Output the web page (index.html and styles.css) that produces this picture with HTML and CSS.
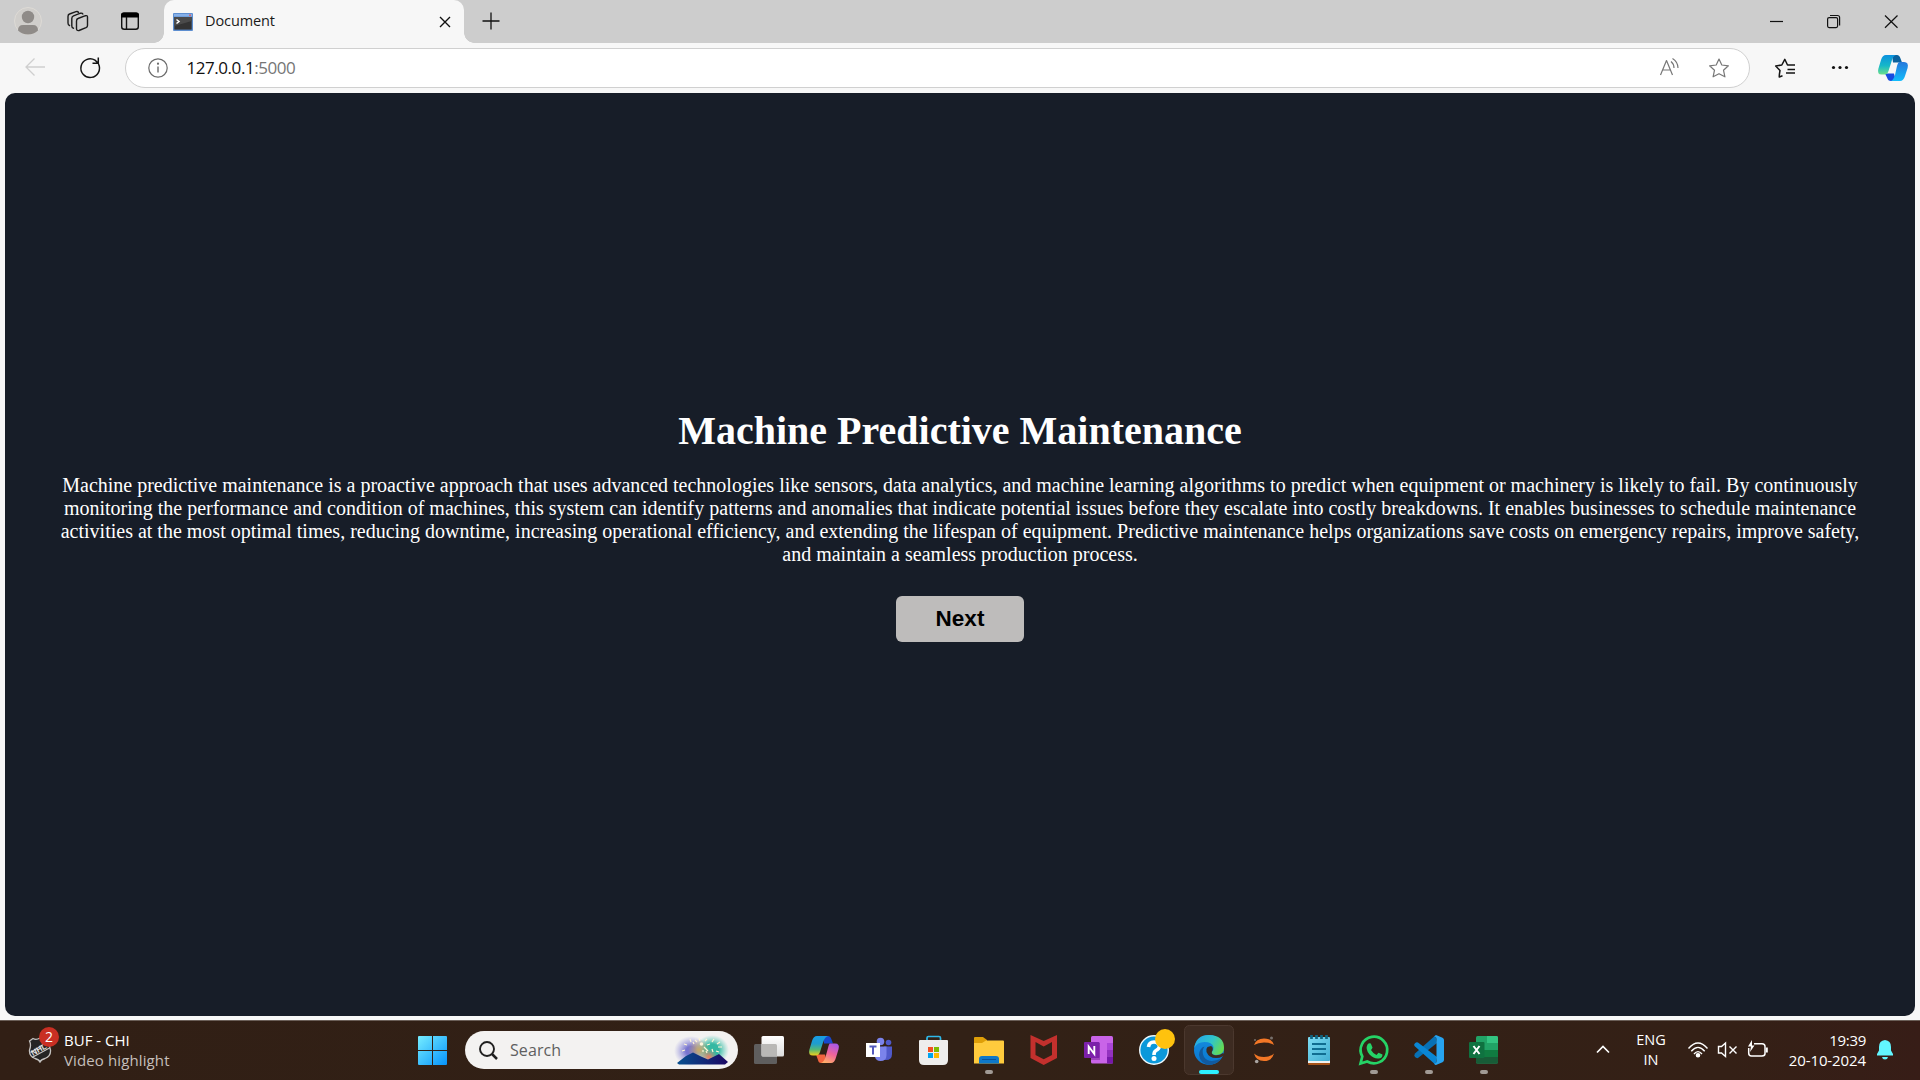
FILE: index.html
```
<!DOCTYPE html>
<html lang="en">
<head>
<meta charset="utf-8">
<title>Document</title>
<link rel="stylesheet" href="styles.css">
</head>
<body>
<header class="tabstrip">
  <svg class="strip-icons" width="164" height="43" viewBox="0 0 164 43" fill="none">
    <circle cx="28" cy="21" r="13.5" fill="#d0cecb" stroke="#dedbd6"/>
    <circle cx="28" cy="17" r="6.2" fill="#8f8b88"/>
    <path d="M18 30.5Q18 25 23 25H33Q38 25 38 30.5Q34 34.5 28 34.5T18 30.5Z" fill="#8f8b88"/>
    <g stroke="#1b1b1b" stroke-width="1.4" stroke-linejoin="round" stroke-linecap="round">
      <path d="M78 18.5L85.500 15.700Q87.500 15.200 87.500 17V25.500Q87.500 27 86 27.700L79 30.500Q76.500 31 76.500 28.500V21Q76.500 19 78 18.500Z"/>
      <path d="M73.500 28.200Q71.800 28 71.800 26V18.500Q71.800 16.500 73.500 15.800L80.500 13.200Q82.300 12.800 82.800 14"/>
      <path d="M69.500 25.500Q68 25 68 23V16.500Q68 14.500 69.500 14L76 11.600Q77.800 11.200 78.500 12.300"/>
    </g>
    <rect x="121.700" y="13.200" width="16.600" height="16" rx="2.500" stroke="#111" stroke-width="1.400"/>
    <path d="M121 17.500V15Q121 12.500 123.500 12.500H136.500Q139 12.500 139 15V17.500Z" fill="#000"/>
    <path d="M126.500 17V29" stroke="#111" stroke-width="1.400"/>
  </svg>
  <div class="tab">
    <svg width="20" height="18" viewBox="0 0 20 18">
      <rect width="20" height="18" rx="1" fill="#5d8ed0"/><rect x="1" y="1" width="18" height="2.500" fill="#86b0e8"/>
      <circle cx="17" cy="2.200" r="1" fill="#d9606a"/><rect x="1.300" y="4" width="17.400" height="12.600" fill="#333"/>
      <path d="M1.300 4H18.700V8L1.300 13Z" fill="#4a4a4a"/><path d="M3.500 6.500L6 8.500L3.500 10.500" fill="none" stroke="#fff" stroke-width="1.500"/>
    </svg>
    <span class="tab-title">Document</span>
    <svg width="12" height="12" viewBox="0 0 12 12"><path d="M1 1L11 11M11 1L1 11" stroke="#111" stroke-width="1.400"/></svg>
  </div>
  <svg class="plus" width="18" height="18" viewBox="0 0 18 18"><path d="M9 .5V17.500M.5 9H17.500" stroke="#111" stroke-width="1.300"/></svg>
  <svg class="caption" width="170" height="43" viewBox="0 0 170 43" fill="none" stroke="#111" stroke-width="1.200">
    <path d="M20 21.500H33"/><rect x="77.600" y="17.600" width="10" height="10" rx="1.500"/><path d="M80 15.500H87.500Q89.600 15.500 89.600 17.500V25.500"/>
    <path d="M135 15.500L147.500 27.700M147.500 15.500L135 27.700"/>
  </svg>
</header>
<nav class="toolbar">
  <svg class="nav-icons" width="125" height="50" viewBox="0 43 125 50" fill="none">
    <path d="M45 67H26M34.500 58.500L26 67L34.500 75.500" stroke="#cfcfcf" stroke-width="1.300"/>
    <path d="M98.500 64A9.300 9.300 0 1 1 95 60.200L98 63M98.300 57.500V63.200H92.500" stroke="#151515" stroke-width="1.500"/>
  </svg>
  <div class="address">
    <svg width="20" height="20" viewBox="0 0 20 20" fill="none" stroke="#6b6b6b" stroke-width="1.200"><circle cx="10" cy="10" r="9.200"/><path d="M10 8.500V14.500" stroke-width="1.400"/><circle cx="10" cy="5.700" r=".5" fill="#6b6b6b"/></svg>
    <span class="url">127.0.0.1<span class="port">:5000</span></span>
    <svg class="address-tools" width="75" height="24" viewBox="1657 56 75 24" fill="none" stroke="#777" stroke-width="1.200" stroke-linejoin="round">
      <path d="M1660.500 75L1666.500 60.500L1672.500 75M1662.700 70H1670.300M1671 61.500Q1674 64 1674 68M1672.500 58.500Q1678 62 1678 68"/>
      <path d="M1719 59L1721.800 65L1728.400 65.800L1723.500 70.200L1724.900 76.800L1719 73.700L1713.100 76.800L1714.500 70.200L1709.600 65.800L1716.200 65Z"/>
    </svg>
  </div>
  <svg width="170" height="50" viewBox="1750 43 170 50" fill="none">
    <defs>
      <linearGradient id="ca" x1="0" y1="0" x2="0" y2="1"><stop stop-color="#0b91df"/><stop offset=".55" stop-color="#16b8c8"/><stop offset="1" stop-color="#6bde8b"/></linearGradient>
      <linearGradient id="cb" x1="0" y1="0" x2="0" y2="1"><stop stop-color="#2578dc"/><stop offset="1" stop-color="#12bdfb"/></linearGradient>
    </defs>
    <path d="M1782.500 75.800L1779.300 77Q1779 76 1780 70.500L1775.700 66L1781.800 65L1784.800 59.300L1787.500 65H1795M1787.500 69.500H1795M1786 73H1795" stroke="#151515" stroke-width="1.500" stroke-linejoin="round"/>
    <circle cx="1833.500" cy="67.500" r="1.600" fill="#111"/><circle cx="1840" cy="67.500" r="1.600" fill="#111"/><circle cx="1846.500" cy="67.500" r="1.600" fill="#111"/>
    <path d="M1892 55H1897Q1899.500 55 1900.500 58.500L1902 62.500H1893Z" fill="#0b629e"/>
    <path d="M1885 73.500H1894L1896 81H1891Q1888 81 1887 77.500Z" fill="#174be0"/>
    <path d="M1886 55H1896Q1893 56 1892 60L1888.500 71Q1887.500 74.500 1884.500 74.500H1881.500Q1877 74.500 1878.300 69L1881 60Q1882.500 55 1886 55Z" fill="url(#ca)"/>
    <path d="M1899 62H1904Q1909 62 1907.600 68L1905 76Q1903.500 81 1900 81H1891Q1893.500 80 1895 75L1897 66Q1898 62 1900 62Z" fill="url(#cb)"/>
  </svg>
</nav>
<main class="page">
  <h1>Machine Predictive Maintenance</h1>
  <p>Machine predictive maintenance is a proactive approach that uses advanced technologies like sensors, data analytics, and machine learning algorithms to predict when equipment or machinery is likely to fail. By continuously monitoring the performance and condition of machines, this system can identify patterns and anomalies that indicate potential issues before they escalate into costly breakdowns. It enables businesses to schedule maintenance activities at the most optimal times, reducing downtime, increasing operational efficiency, and extending the lifespan of equipment. Predictive maintenance helps organizations save costs on emergency repairs, improve safety, and maintain a seamless production process.</p>
  <button class="next">Next</button>
</main>
<footer class="taskbar">
  <div class="widget">
    <div class="logo">
      <svg width="24" height="26" viewBox="0 0 24 26"><path d="M1.500 4L5 1.500Q8 3.500 12 1Q16 3.500 19 1.500L22.500 4Q20.500 8 22.500 13Q23 19 17 21.500Q13 22.500 12 25Q11 22.500 7 21.500Q1 19 1.500 13Q3.500 8 1.500 4Z" fill="#242424" stroke="#c4c2c0" stroke-width="1.300"/><path d="M2.500 15.500L20 4.500M4 20.500L21.500 11" stroke="#c8c8c8" stroke-width="1.100"/><text class="shield-text" x="5" y="19" transform="rotate(-30 5 19)">NHL</text></svg>
      <span class="badge">2</span>
    </div>
    <div class="widget-text"><span class="match">BUF - CHI</span><span class="highlight">Video highlight</span></div>
  </div>
  <svg class="start" width="29" height="29" viewBox="0 0 29 29"><defs><linearGradient id="w" x1="0" y1="0" x2="1" y2="1"><stop stop-color="#76edff"/><stop offset="1" stop-color="#0693fb"/></linearGradient></defs><path fill="url(#w)" d="M1 0H14V14H0V1Q0 0 1 0ZM15 0H28Q29 0 29 1V14H15ZM0 15H14V29H1Q0 29 0 28ZM15 15H29V28Q29 29 28 29H15Z"/></svg>
  <div class="search">
    <svg width="19" height="19" viewBox="0 0 19 19" fill="none" stroke="#202020" stroke-width="1.900"><circle cx="8" cy="8" r="7"/><path d="M13 13L18 18" stroke-width="2.500"/></svg>
    <span class="search-label">Search</span>
    <svg class="fireworks" width="55" height="32" viewBox="0 0 55 32">
      <defs><radialGradient id="f1"><stop offset=".3" stop-color="#7774cf"/><stop offset="1" stop-color="#9a98df" stop-opacity="0"/></radialGradient><radialGradient id="f2"><stop offset=".4" stop-color="#35b8a2"/><stop offset="1" stop-color="#62d0bd" stop-opacity="0"/></radialGradient><radialGradient id="f3"><stop stop-color="#c9a866"/><stop offset="1" stop-color="#c5a772" stop-opacity="0"/></radialGradient><radialGradient id="f5"><stop stop-color="#f07a5e"/><stop offset="1" stop-color="#e08a70" stop-opacity="0"/></radialGradient><linearGradient id="f4"><stop stop-color="#07508f"/><stop offset="1" stop-color="#1c0864"/></linearGradient></defs>
      <ellipse cx="17" cy="17" rx="17" ry="15" fill="url(#f1)"/><ellipse cx="38" cy="16" rx="17" ry="15" fill="url(#f2)"/><circle cx="25" cy="16" r="11" fill="url(#f3)"/><circle cx="35" cy="23" r="8" fill="url(#f5)"/>
      <path d="M3 29L12 22L19 18.500L27 22.500L34 25.500L45 20L54 28L51 30.500H5Z" fill="url(#f4)"/>
      <path d="M23 8L21 6M30 13L34 17M26 7L25 4M31 7L33 5M33 11L36 10M38 8L40 5M43 10L46 8M44 13H48M42 17L45 18M32 17L33 19M11 16L8 17M13 11L10 10M17 8L16 5M20 10L19 8M29 16V18M38 15L39 18" stroke="#fff6d5" stroke-width="1.200"/><circle cx="27.500" cy="10" r="1.800" fill="#fff4dc"/>
    </svg>
  </div>
  <div class="apps">
    <svg class="app" viewBox="742 1020 55 60">
      <defs><linearGradient id="tv" x1="0" y1="0" x2="0" y2="1"><stop stop-color="#fff"/><stop offset="1" stop-color="#ddd"/></linearGradient></defs>
      <rect x="754" y="1044" width="23" height="20" rx="1.500" fill="#5f5e5e"/><rect x="761.500" y="1036" width="22.500" height="20.500" rx="1.500" fill="url(#tv)"/><path d="M761.500 1044H775.500Q777 1044 777 1045.500V1056.500H763Q761.500 1056.500 761.500 1055Z" fill="#b9b8b6"/>
    </svg>
    <svg class="app" viewBox="797 1020 55 60">
      <defs><linearGradient id="p1" x1="0" y1="0" x2="0" y2="1"><stop stop-color="#189de5"/><stop offset=".4" stop-color="#1f9dcd"/><stop offset=".7" stop-color="#55b974"/><stop offset="1" stop-color="#f0d01b"/></linearGradient><linearGradient id="p2" x1=".7" y1="0" x2=".3" y2="1"><stop stop-color="#a858e8"/><stop offset=".5" stop-color="#ef639a"/><stop offset="1" stop-color="#ffad69"/></linearGradient></defs>
      <path d="M823 1036H828Q830.500 1036 831.500 1039.500L833 1043.500H824Z" fill="#1748cc"/><path d="M816 1054.500H825L827 1063H821Q818.500 1063 818 1060Z" fill="#f2643f"/>
      <path d="M817 1036H828Q825 1037 823.500 1041L820 1052Q819 1055.500 815.500 1055.500H813Q808 1055.500 809.300 1050L812 1041Q813.500 1036 817 1036Z" fill="url(#p1)"/>
      <path d="M830 1043.500H835Q840 1043.500 838.600 1049L836 1057.500Q834.500 1063 831 1063H821Q824 1062 825.500 1057L828 1048Q829 1043.500 830 1043.500Z" fill="url(#p2)"/>
    </svg>
    <svg class="app" viewBox="852 1020 55 60">
      <circle cx="888.500" cy="1042.500" r="2.800" fill="#5059c9"/><circle cx="880.500" cy="1041.500" r="3.800" fill="#7b83eb"/><path d="M884 1046.500H892V1054Q892 1060 886 1060H882Z" fill="#5059c9"/><path d="M875 1046.500H886.500V1055Q886.500 1061 880.500 1061Q876 1061 875 1057Z" fill="#7b83eb"/><rect x="866" y="1043" width="14" height="14" fill="#fff"/><path d="M869.500 1046.500H876.500M873 1046.500V1054.500" stroke="#5359be" stroke-width="2"/>
    </svg>
    <svg class="app" viewBox="907 1020 55 60">
      <path d="M927 1042V1038Q927 1036.500 928.500 1036.500H939Q940.500 1036.500 940.500 1038V1042" fill="none" stroke="#2fb9e9" stroke-width="1.700"/><path d="M919 1041Q919 1040 920 1040H947Q948 1040 948 1041V1060Q948 1065 943 1065H924Q919 1065 919 1060Z" fill="#eeedec"/><path fill="#f25022" d="M928 1047h5v5h-5z"/><path fill="#7fba00" d="M934 1047h5v5h-5z"/><path fill="#00a4ef" d="M928 1053h5v5h-5z"/><path fill="#ffb900" d="M934 1053h5v5h-5z"/>
    </svg>
    <svg class="app" viewBox="962 1020 55 60">
      <path d="M974 1038Q974 1037 975 1037H983L987 1040V1045H974Z" fill="#df9f08"/><path d="M974 1043H982L986 1040.500H1003Q1004 1040.500 1004 1041.500V1063.500H974Z" fill="#ffcb3d"/><path d="M979 1063.500V1059Q979 1056 982 1056H996Q999 1056 999 1059V1063.500Z" fill="#0e78c9"/><path d="M982 1059.500H996" stroke="#07529c"/><rect x="985" y="1070" width="8" height="4" rx="2" fill="#a19a95"/>
    </svg>
    <svg class="app" viewBox="1017 1020 55 60"><path d="M1030.500 1035L1043.700 1041L1057 1035V1058L1043.700 1065L1030.500 1058ZM1035.500 1042V1055L1043.700 1059.300L1052 1055V1042L1043.700 1046.500Z" fill="#c3302d" fill-rule="evenodd"/></svg>
    <svg class="app" viewBox="1072 1020 55 60">
      <rect x="1091" y="1036" width="22" height="27.500" rx="1.500" fill="#c964e8"/><path d="M1107 1043H1113V1050H1107Z" fill="#ac46d9"/><path d="M1107 1050H1113V1057H1107Z" fill="#9332bf"/><path d="M1107 1057H1113V1063.500H1107Z" fill="#7719aa"/><rect x="1091" y="1043" width="9" height="17" fill="#9e43bd"/><rect x="1084" y="1042" width="15.500" height="16" rx="1" fill="#7c20aa"/><path d="M1088.700 1054V1046.500L1094.300 1054V1046" fill="none" stroke="#fff" stroke-width="1.900"/>
    </svg>
    <svg class="app" viewBox="1127 1020 55 60"><circle cx="1154" cy="1050" r="14.300" fill="#0b98da" stroke="#eef8fc" stroke-width="1.400"/><path d="M1148.500 1047Q1149 1042 1154 1042T1159.500 1046.500Q1159 1049 1156 1050.500Q1154 1051.500 1154 1055" fill="none" stroke="#fff" stroke-width="3.600"/><circle cx="1154" cy="1058.500" r="2.500" fill="#fff"/><circle cx="1165" cy="1039" r="10" fill="#ffc20e"/></svg>
    <svg class="app" viewBox="1182 1020 55 60">
      <defs><linearGradient id="e1" x1="0" y1=".2" x2="1" y2=".6"><stop stop-color="#24a6ea"/><stop offset=".55" stop-color="#31c5c8"/><stop offset="1" stop-color="#67dc4e"/></linearGradient><linearGradient id="e2" x1="0" y1="0" x2="0" y2="1"><stop stop-color="#168de0"/><stop offset="1" stop-color="#0877d0"/></linearGradient></defs>
      <rect x="1184.500" y="1025.500" width="49" height="49" rx="5" fill="#3d2b21" stroke="#4b382e"/>
      <circle cx="1209" cy="1050" r="15" fill="url(#e2)"/>
      <path d="M1194.200 1048Q1196 1035 1209 1035Q1224 1035.500 1224 1048Q1224 1055 1216 1055Q1211 1055 1211.500 1052Q1214 1050 1213.500 1047Q1212 1042 1204.500 1042Q1197 1042 1194.200 1048Z" fill="url(#e1)"/>
      <path d="M1204.500 1046.500Q1201 1051 1204 1057Q1209 1064 1221.500 1058.500Q1216 1065 1209 1065Q1200 1063 1199 1055Q1199.500 1048 1204.500 1046.500Z" fill="#125a9f"/><path d="M1207.500 1047Q1205.500 1049 1206.500 1052Q1209 1058 1216 1058Q1220 1058 1222.300 1056.500L1224.500 1054.500L1223 1053Q1219 1056 1214 1055Q1210.500 1053.500 1212.500 1050.500Q1213.500 1047 1211 1046Z" fill="#3d2b21"/>
      <rect x="1199" y="1070" width="20" height="4" rx="2" fill="#2cf0ff"/>
    </svg>
    <svg class="app" viewBox="1237 1020 55 60"><path d="M1254 1045Q1256 1038.500 1264 1038.500T1274 1045Q1270 1042.500 1264 1042.500T1254 1045ZM1254 1053.500Q1256 1061 1264 1061T1274 1053.500Q1270 1057 1264 1057T1254 1053.500Z" fill="#f37726"/><circle cx="1271.500" cy="1038" r="1.500" fill="#77706c"/><circle cx="1255" cy="1040" r="1" fill="#77706c"/><circle cx="1256.700" cy="1061.500" r="1.800" fill="#aaa5a2"/></svg>
    <svg class="app" viewBox="1292 1020 55 60"><defs><linearGradient id="n" x1="0" y1="0" x2="1" y2="1"><stop stop-color="#7ddcf3"/><stop offset="1" stop-color="#42aed2"/></linearGradient></defs><rect x="1308" y="1060" width="22" height="5" rx="1" fill="#a65318"/><rect x="1308" y="1058" width="22" height="5" fill="#f1f1ef"/><rect x="1308" y="1037" width="22" height="24" rx="1" fill="url(#n)"/><path d="M1311.500 1035V1039M1316.500 1035V1039M1321.500 1035V1039M1326.500 1035V1039" stroke="#106480" stroke-width="2.700"/><path d="M1312 1044H1326M1312 1049H1326M1312 1054H1326" stroke="#106d91" stroke-width="2"/></svg>
    <svg class="app" viewBox="1347 1020 55 60"><path d="M1360.500 1063.500L1362.300 1056.500A13.300 13.300 0 1 1 1367.200 1061.500Z" fill="none" stroke="#25d366" stroke-width="2.700"/><path d="M1367.500 1044.500Q1369 1042.500 1370.800 1043.500L1372.500 1047.500Q1372 1049 1371 1050Q1373 1053.500 1376.500 1055L1378.500 1052.800L1382.500 1054.500Q1382.500 1058.500 1378.500 1058.500Q1374 1059 1369.500 1054.500Q1365 1049 1367.500 1044.500Z" fill="#25d366"/><rect x="1370" y="1070" width="8" height="4" rx="2" fill="#a19a95"/></svg>
    <svg class="app" viewBox="1402 1020 55 60"><path d="M1415 1053.500L1435.500 1035.300L1437 1043L1418 1058Q1416.500 1058.500 1415 1057Q1413.500 1055.500 1415 1053.500Z" fill="#0871b5"/><path d="M1414.500 1046Q1413.500 1044.500 1415 1043.300L1416 1042.500Q1417 1042 1418 1042.600L1437 1057L1435.500 1064.700Z" fill="#0a86d4"/><path d="M1436 1035L1442.500 1037.800Q1444 1038.500 1444 1040V1060Q1444 1061.500 1442.500 1062.200L1436 1065Q1435 1065 1434 1063.500Q1436.500 1064 1436.500 1061V1039Q1436.500 1036 1434 1036.500Z" fill="#27a4f0"/><rect x="1425" y="1070" width="8" height="4" rx="2" fill="#a19a95"/></svg>
    <svg class="app" viewBox="1457 1020 55 60"><rect x="1476" y="1036" width="22" height="27.500" rx="1.500" fill="#21a366"/><path d="M1487 1036H1496.500Q1498 1036 1498 1037.500V1043H1487Z" fill="#33c481"/><path d="M1487 1050H1498V1057H1487Z" fill="#107c41"/><path d="M1476 1050H1487V1057H1476Z" fill="#107c41"/><path d="M1476 1057H1498V1062Q1498 1063.500 1496.500 1063.500H1477.500Q1476 1063.500 1476 1062Z" fill="#185c37"/><rect x="1469" y="1042" width="15.500" height="16" rx="1" fill="#0f7240"/><path d="M1473.500 1046L1479.500 1054M1479.500 1046L1473.500 1054" stroke="#fff" stroke-width="2"/><rect x="1480" y="1070" width="8" height="4" rx="2" fill="#a19a95"/></svg>
  </div>
  <svg class="chevron" width="14" height="9" viewBox="0 0 14 9"><path d="M1 7.500L7 1.500L13 7.500" fill="none" stroke="#fff" stroke-width="1.700"/></svg>
  <div class="language"><span>ENG</span><span>IN</span></div>
  <svg class="status" width="84" height="24" viewBox="1686 1038 84 24" fill="none" stroke="#fff" stroke-width="1.400">
    <path d="M1688.500 1048.500Q1698 1037.500 1707.500 1048.500M1691.300 1051.300Q1698 1043.500 1704.700 1051.300M1694 1054Q1698 1049.300 1702 1054"/><circle cx="1698" cy="1055.300" r="1.600" fill="#fff"/>
    <path d="M1718.500 1046.500H1721.500L1725.500 1043V1056.500L1721.500 1053H1718.500ZM1729.500 1046.500L1736.500 1053.500M1736.500 1046.500L1729.500 1053.500"/>
    <path d="M1754 1043.700H1762Q1765 1043.700 1765 1046.500V1053.500Q1765 1056 1762 1056H1751.500Q1748.700 1056 1748.700 1053V1048" stroke-width="1.500"/><path d="M1766.800 1047.500V1052.500" stroke-width="2"/><path d="M1752 1040L1748 1046.500H1751L1750 1052L1754.500 1045.500H1752Z" fill="#fff" stroke="none"/>
  </svg>
  <div class="clock"><span class="time">19:39</span><span class="date">20-10-2024</span></div>
  <svg class="bell" width="16" height="20" viewBox="0 0 16 20"><path d="M8 0Q14 .5 14 7V10.500L16 14V15.500H0V14L2 10.500V7Q2 .5 8 0ZM5 17H11Q10.500 19.500 8 19.500T5 17Z" fill="#62f6ff"/></svg>
</footer>
</body>
</html>
```
FILE: styles.css
```
* { box-sizing: border-box; }
body { margin: 0; height: 1080px; display: flex; flex-direction: column; background: #f7f7f7; font-family: "Open Sans", "Noto Sans", sans-serif; overflow: hidden; }
svg { display: block; flex: none; }
span { white-space: nowrap; }
.tabstrip { height: 43px; flex: none; display: flex; align-items: center; background: #cdcdcd; }
.tab { position: relative; width: 300px; height: 43px; padding: 0 13px 0 9px; display: flex; align-items: center; background: #f7f7f7; border-radius: 10px 10px 0 0; }
.tab::before, .tab::after { content: ""; position: absolute; bottom: 0; width: 10px; height: 10px; }
.tab::before { left: -10px; background: radial-gradient(circle at 0 0, transparent 9.5px, #f7f7f7 10px); }
.tab::after { right: -10px; background: radial-gradient(circle at 100% 0, transparent 9.5px, #f7f7f7 10px); }
.tab-title { margin: 0 auto 2px 12px; font-size: 14.5px; letter-spacing: -.1px; color: #1a1a1a; }
.plus { margin: 0 0 2px 17.5px; }
.caption { margin-left: auto; }
.toolbar { height: 50px; flex: none; display: flex; }
.address { width: 1625px; height: 40px; margin-top: 5px; padding: 0 17px 0 22px; display: flex; align-items: center; background: #fff; border: 1px solid #d0d0d0; border-radius: 20px; }
.url { margin: 0 0 2px 18.5px; font-size: 17px; letter-spacing: -.45px; color: #111; }
.port { color: #767676; }
.address-tools { margin-left: auto; }
.page { width: 1910px; height: 923px; margin: 0 5px 4px; padding: 0 53px 59px; flex: none; display: flex; flex-direction: column; align-items: center; justify-content: center; background: #171d28; border-radius: 10px; color: #fff; font-family: "Liberation Serif", "Times New Roman", serif; }
h1 { margin: 0; font-size: 40px; line-height: 46px; }
p { margin: 20px 0 30px; font-size: 20px; line-height: 23px; text-align: center; }
.next { width: 128px; height: 46px; padding: 0 0 1px; border: 0; border-radius: 6px; background: #bebcbb; color: #000; font: bold 22.5px "Liberation Sans", Arial, sans-serif; }
.taskbar { height: 60px; flex: none; display: flex; align-items: center; background: linear-gradient(90deg, #311f15, #322116 50%, #342016 90%, #371d17); box-shadow: inset 0 1px #6b5f58; color: #fff; }
.widget { width: 418px; padding-left: 28px; display: flex; align-items: center; }
.logo { position: relative; width: 36px; }
.shield-text { fill: #e4e4e4; font: bold 8px "Liberation Sans", Arial, sans-serif; }
.badge { position: absolute; left: 11px; top: -10px; width: 20px; height: 20px; border-radius: 50%; background: #c92f23; font-size: 14px; line-height: 20px; text-align: center; }
.widget-text { display: flex; flex-direction: column; font-size: 15px; line-height: 20px; }
.highlight { color: #c5bfbb; letter-spacing: .12px; }
.search { width: 273px; height: 38px; margin-left: 18px; padding: 0 9px 0 14px; display: flex; align-items: center; border-radius: 19px; background: #f3f2f1; }
.search-label { margin: 0 auto 0 12px; font-size: 16px; letter-spacing: .1px; color: #5f5f5f; }
.apps { margin-left: 4px; display: flex; }
.app { width: 55px; height: 60px; }
.chevron { margin: 0 0 1px 84px; }
.language { width: 42px; margin-left: 20px; display: flex; flex-direction: column; align-items: center; font-size: 14.5px; line-height: 20px; }
.status { margin-left: 14px; }
.clock { width: 96px; display: flex; flex-direction: column; align-items: flex-end; font-size: 15px; line-height: 20px; }
.time { letter-spacing: -.3px; }
.date { letter-spacing: -.1px; }
.bell { margin-left: 11px; }
```
